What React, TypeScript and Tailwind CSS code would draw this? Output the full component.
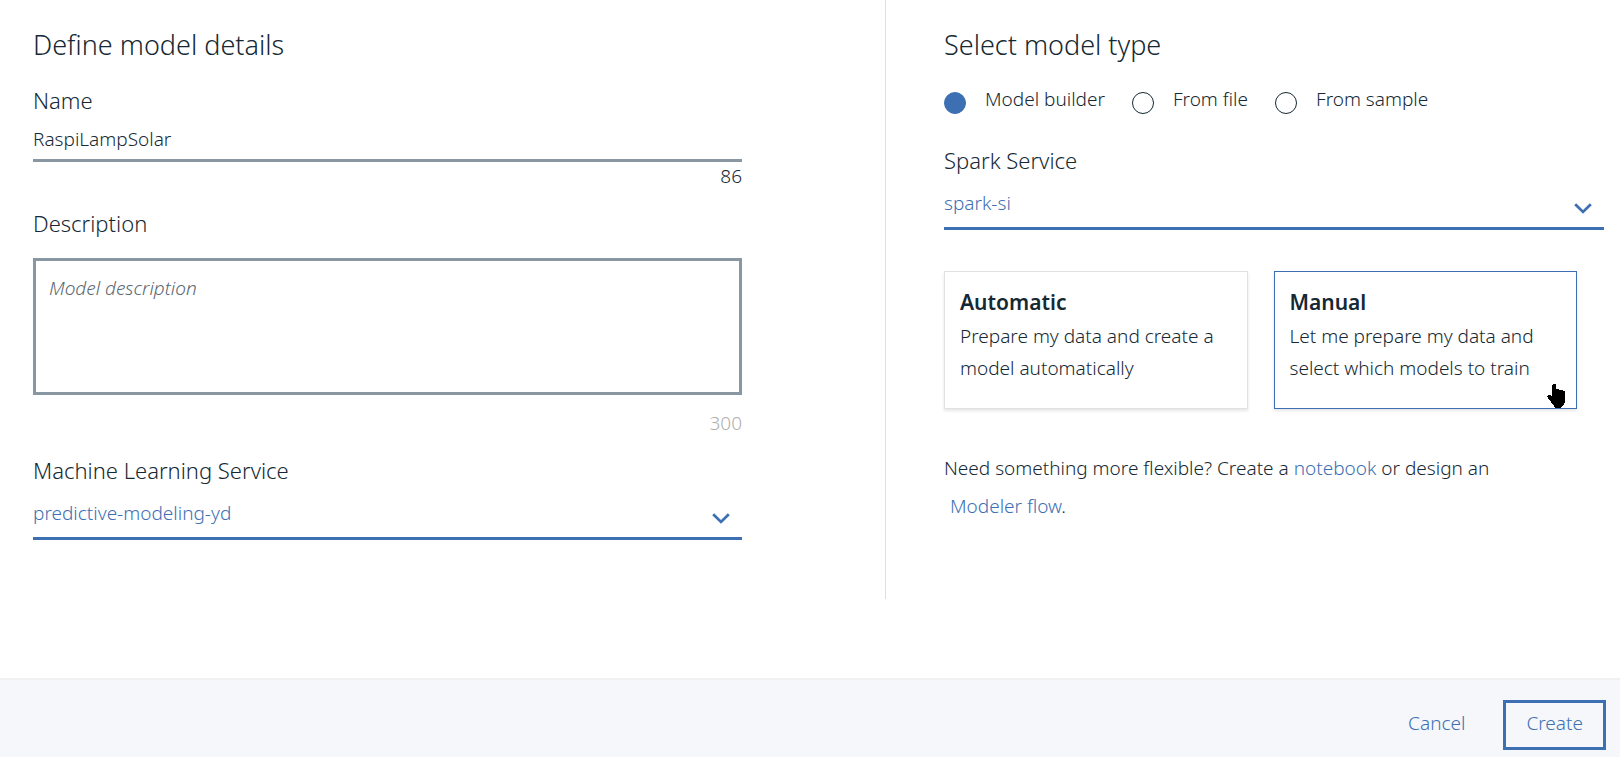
import { useState, type ReactNode } from 'react';

type SelectFieldProps = {
  id: string;
  label: string;
  options: string[];
};

function SelectField({ id, label, options }: SelectFieldProps) {
  return (
    <div>
      <label htmlFor={id} className="block text-[22px] leading-7">
        {label}
      </label>
      <div className="relative">
        <select
          id={id}
          className="block h-14 w-full appearance-none rounded-none border-b-3 border-[#3d70b2] bg-transparent pt-[6px] pr-12 text-[19px] text-[#3d70b2] outline-none"
        >
          {options.map((option) => (
            <option key={option}>{option}</option>
          ))}
        </select>
        <svg
          className="pointer-events-none absolute right-3 bottom-4 h-[11px] w-[18px]"
          viewBox="0 0 18 11"
          fill="none"
          stroke="#3d70b2"
          strokeWidth="2.8"
          aria-hidden="true"
        >
          <path d="M1.2 1.2 9 8.9l7.8-7.7" />
        </svg>
      </div>
    </div>
  );
}

type TypeCardProps = {
  title: string;
  text: string;
  selected: boolean;
  onSelect: () => void;
  children?: ReactNode;
};

function TypeCard({ title, text, selected, onSelect, children }: TypeCardProps) {
  return (
    <button
      type="button"
      aria-pressed={selected}
      onClick={onSelect}
      className={
        'relative border bg-white px-[15px] pt-4 pb-6 text-left shadow-[0_2px_3px_rgba(0,0,0,0.1)] ' +
        (selected ? 'border-[#3d70b2]' : 'border-[#dfe3e6]')
      }
    >
      <span className="block text-[21px] leading-7 font-semibold">{title}</span>
      <span className="mt-1 block text-[19px] leading-8">{text}</span>
      {children}
    </button>
  );
}

function HandPointer() {
  return (
    <svg
      className="pointer-events-none absolute right-[11px] bottom-0 h-6 w-[18px]"
      viewBox="0 0 18 24"
      fill="#000"
      shapeRendering="crispEdges"
      aria-hidden="true"
    >
      <path d="M6 0h2l1 1v4h3v1h3l1 1h1l1 1v10l-1 2-1 1-1 2-2 1H8l-1-2-2-2-1-2-2-2-1-2-1-1v-1l1-1h2l2 1V1z" />
    </svg>
  );
}

const sources = ['Model builder', 'From file', 'From sample'];

export default function App() {
  const [source, setSource] = useState(sources[0]);
  const [mode, setMode] = useState('Manual');

  return (
    <form
      className="flex min-h-screen flex-col bg-white font-['Noto_Sans',sans-serif] font-light text-[#152934]"
      onSubmit={(event) => event.preventDefault()}
    >
      <main className="mb-[79px] grid grid-cols-[886fr_734fr]">
        <section className="border-r border-[#dfdfdf] pt-[27px] pr-[143px] pb-[59px] pl-[33px]">
          <h1 className="text-[27px] leading-9">Define model details</h1>

          <label htmlFor="name" className="mt-[23px] block text-[22px] leading-7">
            Name
          </label>
          <input
            id="name"
            type="text"
            defaultValue="RaspiLampSolar"
            className="block h-12 w-full rounded-none border-b-3 border-[#8897a2] bg-transparent pt-1 text-[19px] outline-none"
          />
          <p className="text-right text-[19px] leading-7">86</p>

          <label htmlFor="description" className="mt-[19px] block text-[22px] leading-7">
            Description
          </label>
          <textarea
            id="description"
            placeholder="Model description"
            className="mt-[21px] block h-[137px] w-full resize-none rounded-none border-3 border-[#8897a2] px-[13px] py-[13px] text-[19px] leading-7 outline-none placeholder:text-[#5a6872] placeholder:italic"
          />
          <p className="mt-[14px] mb-[19px] text-right text-[19px] leading-7 text-[#aeaeae]">300</p>

          <SelectField
            id="ml-service"
            label="Machine Learning Service"
            options={['predictive-modeling-yd']}
          />
        </section>

        <section className="pt-[27px] pr-4 pl-[58px]">
          <h2 className="text-[27px] leading-9">Select model type</h2>

          <div role="radiogroup" aria-label="Model type" className="mt-[22px] mb-8 flex gap-[27px]">
            {sources.map((name) => (
              <label key={name} className="flex items-start gap-[19px] text-[19px] leading-7">
                <input
                  type="radio"
                  name="source"
                  checked={source === name}
                  onChange={() => setSource(name)}
                  className="mt-[7px] size-[22px] shrink-0 appearance-none rounded-full border border-[#152934] checked:border-[#3d70b2] checked:bg-[#3d70b2]"
                />
                {name}
              </label>
            ))}
          </div>

          <SelectField id="spark-service" label="Spark Service" options={['spark-si']} />

          <div className="mt-[41px] mr-[27px] grid grid-cols-2 gap-[26px]">
            <TypeCard
              title="Automatic"
              text="Prepare my data and create a model automatically"
              selected={mode === 'Automatic'}
              onSelect={() => setMode('Automatic')}
            />
            <TypeCard
              title="Manual"
              text="Let me prepare my data and select which models to train"
              selected={mode === 'Manual'}
              onSelect={() => setMode('Manual')}
            >
              <HandPointer />
            </TypeCard>
          </div>

          <p className="mt-10 mr-[27px] text-[19px] leading-[38px]">
            Need something more flexible? Create a{' '}
            <a href="#notebook" className="text-[#3d70b2]">
              notebook
            </a>{' '}
            or design an{' '}
            <span className="inline-block pl-[6px]">
              <a href="#flow" className="text-[#3d70b2]">
                Modeler flow
              </a>
              .
            </span>
          </p>
        </section>
      </main>

      <footer className="flex grow items-start justify-end gap-[38px] border-t-2 border-[#f1f1f1] bg-[#f5f7fa] pt-5 pr-[14px] text-[19px] text-[#3d70b2]">
        <button type="button" className="h-[50px] pb-[3px]">
          Cancel
        </button>
        <button type="submit" className="h-[50px] border-3 border-[#3d70b2] px-5 pb-[3px]">
          Create
        </button>
      </footer>
    </form>
  );
}
